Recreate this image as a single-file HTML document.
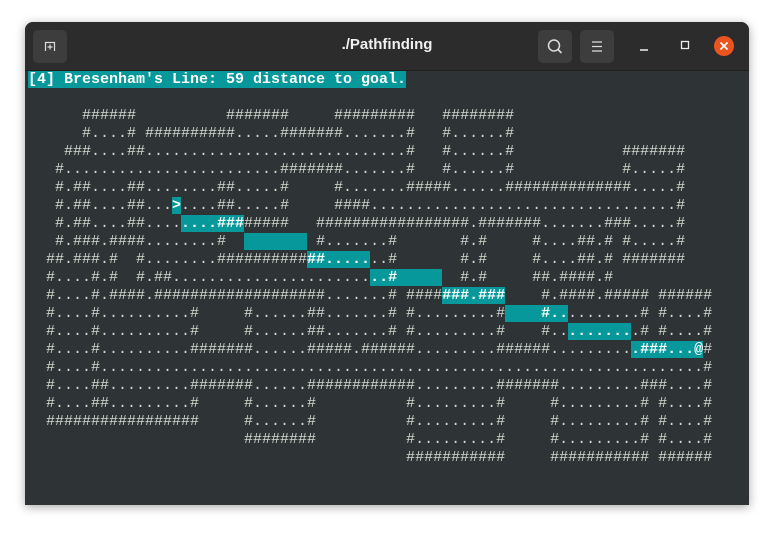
<!DOCTYPE html>
<html><head><meta charset="utf-8"><style>
html,body{margin:0;padding:0;width:774px;height:533px;background:#fff;overflow:hidden}
.win{position:absolute;left:25px;top:22px;width:724px;height:483px;background:#2e3436;border-radius:8px 8px 0 0;box-shadow:0 2px 10px rgba(0,0,0,.35);overflow:hidden}
.tb{position:absolute;left:0;top:0;width:724px;height:48px;background:#2c2c2c;border-bottom:1px solid #1f1f1f}
.btn{position:absolute;top:8px;width:34px;height:33px;background:#3d3d3d;border-radius:5px}
.title{position:absolute;left:0;width:724px;top:14px;text-align:center;color:#f0f0f0;font:bold 15px "Liberation Sans",sans-serif}
pre{position:absolute;left:3px;top:49px;margin:0;font:15px/18px "Liberation Mono",monospace;color:#d3d7cf;white-space:pre}
.h{background:#06989a;color:#fff;font-weight:bold}
</style></head><body>
<div class="win">
<div class="tb">
<div class="btn" style="left:8px"><svg width="34" height="33"><path d="M12.5 21V12.5h9V21" fill="none" stroke="#ddd" stroke-width="1.2"/><path d="M17 14.5v5M14.5 17h5" stroke="#ddd" stroke-width="1.2"/></svg></div>
<div class="title">./Pathfinding</div>
<div class="btn" style="left:513px"><svg width="34" height="33"><circle cx="16" cy="15.5" r="5.5" fill="none" stroke="#ddd" stroke-width="1.5"/><path d="M20 19.5l3.5 3.5" stroke="#ddd" stroke-width="1.6"/></svg></div>
<div class="btn" style="left:555px"><svg width="34" height="33"><path d="M12 12h10M12 16.5h10M12 21h10" stroke="#ddd" stroke-width="1.2"/></svg></div>
<svg style="position:absolute;left:612px;top:16px" width="20" height="20"><path d="M3 12h8" stroke="#eee" stroke-width="1.5"/></svg>
<svg style="position:absolute;left:650px;top:16px" width="20" height="20"><rect x="6.5" y="3.5" width="7" height="7" fill="none" stroke="#eee" stroke-width="1.3"/></svg>
<svg style="position:absolute;left:689px;top:14px" width="22" height="22"><circle cx="10" cy="10" r="10" fill="#e95420"/><path d="M6.5 6.5l7 7M13.5 6.5l-7 7" stroke="#fff" stroke-width="1.6"/></svg>
</div>
<pre><span class="h">[4] Bresenham's Line: 59 distance to goal.</span>

      ######          #######     #########   ########
      #....# ##########.....#######.......#   #......#
    ###....##.............................#   #......#            #######
   #........................#######.......#   #......#            #.....#
   #.##....##........##.....#     #.......#####......##############.....#
   #.##....##...<span class="h">&gt;</span>....##.....#     ####..................................#
   #.##....##....<span class="h">....###</span>#####   #################.#######.......###.....#
   #.###.####........#  <span class="h">       </span> #.......#       #.#     #....##.# #.....#
  ##.###.#  #........##########<span class="h">##.....</span>..#       #.#     #....##.# #######
  #....#.#  #.##......................<span class="h">..#     </span>  #.#     ##.####.#
  #....#.####.###################.......# ####<span class="h">###.###</span>    #.####.##### ######
  #....#..........#     #......##.......# #.........#<span class="h">    #..</span>........# #....#
  #....#..........#     #......##.......# #.........#    #..<span class="h">.......</span>.# #....#
  #....#..........#######......#####.######.........######.........<span class="h">.###...@</span>#
  #....#...................................................................#
  #....##.........#######......############.........#######.........###....#
  #....##.........#     #......#          #.........#     #.........# #....#
  #################     #......#          #.........#     #.........# #....#
                        ########          #.........#     #.........# #....#
                                          ###########     ########### ######</pre>
</div>
</body></html>
